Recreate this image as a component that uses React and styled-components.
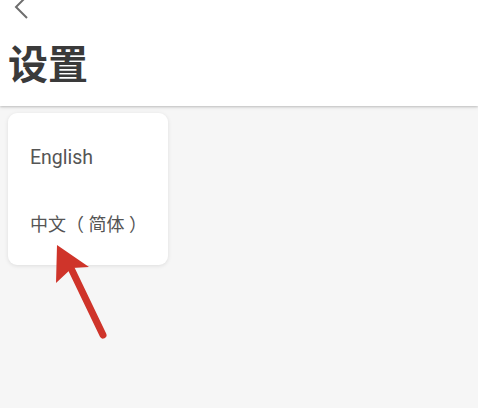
import React from 'react'
import styled, { createGlobalStyle } from 'styled-components'

const GlobalStyle = createGlobalStyle`
  html, body {
    margin: 0;
    padding: 0;
    background: #f6f6f6;
    font-family: Roboto, "Noto Sans CJK SC", sans-serif;
  }
`

const Page = styled.div`
  width: 478px;
  height: 408px;
  overflow: hidden;
  background: #f6f6f6;
  position: relative;
`

const Header = styled.header`
  background: #fff;
  height: 106px;
  box-shadow: 0 1px 2px rgba(0, 0, 0, 0.18), 0 2px 4px rgba(0, 0, 0, 0.06);
  display: flex;
  flex-direction: column;
`

const BackButton = styled.div`
  height: 20px;
  padding-left: 13px;
  display: flex;
  align-items: flex-end;
  overflow: hidden;
  color: #6e6e6e;
`

const Title = styled.h1`
  margin: 18px 0 0 8px;
  font-family: "Noto Sans CJK SC", sans-serif;
  font-size: 40px;
  line-height: 48px;
  font-weight: 700;
  color: #3a3a3a;
`

const Body = styled.main`
  padding: 7px 8px;
`

const Menu = styled.ul`
  list-style: none;
  margin: 0;
  padding: 12px 0 10px;
  width: 160px;
  box-sizing: border-box;
  background: #fff;
  border-radius: 9px;
  box-shadow: 0 1px 4px rgba(0, 0, 0, 0.1);
`

const MenuItem = styled.li`
  padding: 0 22px;
  height: 65px;
  display: flex;
  align-items: center;
  font-size: ${p => (p.$cjk ? '18px' : '19.5px')};
  color: #555;
  white-space: pre;
`

const Arrow = styled.svg`
  position: absolute;
  left: 0;
  top: 0;
  pointer-events: none;
`

const App = () => (
  <Page>
    <GlobalStyle />
    <Header>
      <BackButton>
        <svg width="18" height="24" viewBox="0 0 18 24">
          <path d="M14 0 L3 11 L14 22" fill="none" stroke="currentColor" strokeWidth="2" />
        </svg>
      </BackButton>
      <Title>设置</Title>
    </Header>
    <Body>
      <Menu>
        <MenuItem>English</MenuItem>
        <MenuItem $cjk>中文（ 简体 ）</MenuItem>
      </Menu>
    </Body>
    <Arrow width="478" height="408" viewBox="0 0 478 408">
      <line x1="68" y1="262" x2="103" y2="335" stroke="#cf342a" strokeWidth="7" strokeLinecap="round" />
      <polygon points="57,245 89,267 72,268 56,283" fill="#cf342a" />
    </Arrow>
  </Page>
)

export default App
